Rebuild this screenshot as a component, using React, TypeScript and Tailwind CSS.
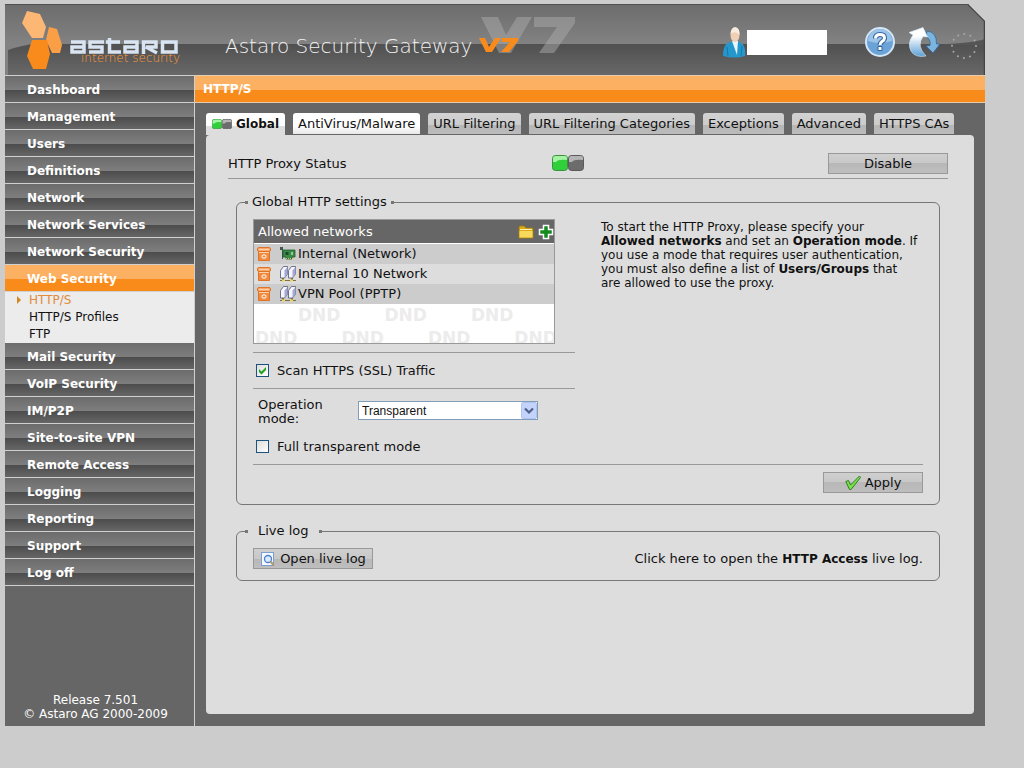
import type { ReactNode } from "react";

const menuTop = ["Dashboard", "Management", "Users", "Definitions", "Network", "Network Services", "Network Security"];
const menuBottom = ["Mail Security", "VoIP Security", "IM/P2P", "Site-to-site VPN", "Remote Access", "Logging", "Reporting", "Support", "Log off"];

const tabs = ["URL Filtering", "URL Filtering Categories", "Exceptions", "Advanced", "HTTPS CAs"];

const networks = [
  { name: "Internal (Network)", kind: "card" },
  { name: "Internal 10 Network", kind: "net" },
  { name: "VPN Pool (PPTP)", kind: "net" },
];

function StatusLight({ small }: { small?: boolean }) {
  return (
    <svg className={small ? "h-[10px] w-5" : "h-4 w-8"} viewBox="0 0 32 16" role="img" aria-label="Enabled">
      <rect x="0.5" y="0.5" width="15" height="15" rx="3" fill="#2fd03a" stroke="#3b8f3f" />
      <path d="M1 7V3.500Q1 1 3.500 1H13Q15 1 15 3V5Q6 4 4 7Z" fill="#a4f2a4" />
      <rect x="16.500" y="0.5" width="15" height="15" rx="3" fill="#6c6c6c" stroke="#5a5a5a" />
      <path d="M17 7V3.500Q17 1 19.500 1H29Q31 1 31 3V5Q22 4 20 7Z" fill="#b5b5b5" />
    </svg>
  );
}

function TrashIcon() {
  return (
    <svg className="h-[14px] w-[14px]" viewBox="0 0 14 14" aria-hidden="true">
      <path d="M1.500 4.500H12.500V13.500H1.500Z" fill="#f28a3c" stroke="#dd7429" />
      <rect x="0.5" y="0.5" width="13" height="4" rx="1.500" fill="#f8a868" stroke="#dd7429" />
      <path d="M2 2.500H12M2 5.500H12" stroke="#fbd0ab" />
      <rect x="5" y="8" width="4" height="3" rx="1" fill="none" stroke="#fff" />
    </svg>
  );
}

function CardIcon() {
  return (
    <svg className="h-4 w-4" viewBox="0 0 16 16" aria-hidden="true">
      <path d="M0 1H3V13H2V4H0Z" fill="#3d5a45" />
      <path d="M3 4H15V11H12V13H6V11H3Z" fill="#3c8a4a" stroke="#1f5a2d" strokeWidth=".8" />
      <rect x="5.500" y="6" width="3" height="3" fill="#1e4a2a" />
      <rect x="11" y="6" width="2" height="3" fill="#8ccf92" />
      <path d="M6 12.500H13" stroke="#d8c860" strokeDasharray="1 1" />
    </svg>
  );
}

function NetworkIcon() {
  return (
    <svg className="h-4 w-4" viewBox="0 0 16 16" aria-hidden="true">
      <path d="M3 11V14M12 11V14" stroke="#8d7a35" strokeWidth="2" />
      <path d="M0 14.500H16" stroke="#7c7048" />
      <path d="M2 14.500H5M10 14.500H13" stroke="#efd566" strokeWidth="2" />
      <path d="M.5 4.500L3.500 .5H7.500V8L4.500 12H.5Z" fill="#f4f5ff" stroke="#50546e" strokeWidth=".8" />
      <path d="M4.500 4.500L7.500 1V8L4.500 12Z" fill="#a3a8d6" />
      <path d="M8.500 4.500L11.500 .5H15.500V8L12.500 12H8.500Z" fill="#f4f5ff" stroke="#50546e" strokeWidth=".8" />
      <path d="M12.500 4.500L15.500 1V8L12.500 12Z" fill="#a3a8d6" />
    </svg>
  );
}

function FolderIcon() {
  return (
    <svg className="h-4 w-4" viewBox="0 0 16 16" aria-hidden="true">
      <path d="M1 3.500Q1 2 2.500 2H6L8 4H14Q15 4 15 5V14H1Z" fill="#d9a91c" stroke="#a57d0b" strokeWidth=".8" />
      <path d="M2 5.500H14" stroke="#fff3b0" />
      <path d="M1.500 7H14.500V13.500H1.500Z" fill="#f7da5c" />
    </svg>
  );
}

function PlusIcon() {
  return (
    <svg className="h-4 w-4" viewBox="0 0 16 16" aria-hidden="true">
      <path d="M5.500 1.500H10.500V5.500H14.500V10.500H10.500V14.500H5.500V10.500H1.500V5.500H5.500Z" fill="#178a1e" stroke="#fff" strokeWidth="1.500" />
    </svg>
  );
}

function CheckIcon() {
  return (
    <svg className="h-4 w-4" viewBox="0 0 16 16" aria-hidden="true">
      <path d="M.8 6.500L3.500 5.500 5.500 10 14.500 1 15.500 2.500 6 14.500 4.500 14.500Z" fill="#7be04c" stroke="#2f7d24" />
    </svg>
  );
}

function LogIcon() {
  return (
    <svg className="h-4 w-4" viewBox="0 0 16 16" aria-hidden="true">
      <rect x="1.500" y="1.500" width="12" height="13" fill="#f4f8ff" stroke="#7d9fd0" />
      <circle cx="8" cy="8" r="3.500" fill="#dcebfb" stroke="#4c82c8" strokeWidth="1.300" />
      <path d="M10.500 10.500L14 14.500" stroke="#b09a70" strokeWidth="2" />
    </svg>
  );
}

function Logo() {
  return (
    <svg className="h-[71px] w-[220px] shrink-0" viewBox="0 0 220 71" role="img" aria-label="Astaro internet security">
      <path d="M0 39H34Q14 42 3 46V71H0Z" fill="#828282" />
      <path d="M22 7 35 10 41 23 38 34H27L17 19Z" fill="#fdb775" />
      <path d="M44 23 52 25 57 41 55 49H47L41 36Z" fill="#fb9f46" />
      <path d="M27 36H42L45 50 41 65H28L22 52Z" fill="#f98a1c" />
      <g fill="none" stroke="#d8e4f2" strokeWidth="3.500">
        <path d="M66 38H79V48H67V43H79" />
        <path d="M99 38H85V43H97V48H84" />
        <path d="M104.500 34V48H116M101 38H115" />
        <path d="M119 38H132V48H120V43H132" />
        <path d="M138.500 50V38H151V43H141L152 49" />
        <path d="M157.500 38H171V48H157.500Z" />
      </g>
      <text x="76" y="58" className="font-['DejaVu_Sans'] text-[12px] font-extralight" fill="#ff9a33">internet security</text>
    </svg>
  );
}

function Product() {
  return (
    <svg className="h-[71px] w-[360px] shrink-0" viewBox="0 0 360 71" role="img" aria-label="Astaro Security Gateway V7">
      <path d="M256 13H273L281 31 292 13H307L286 49H274Z" fill="#aaa" opacity=".5" />
      <path d="M309 13H350V19L329 49H314L332 23H309Z" fill="#aaa" opacity=".5" />
      <text x="0" y="49" className="font-['DejaVu_Sans'] text-[20px] font-extralight" fill="#f2f2f2">Astaro Security Gateway</text>
      <path d="M254 34H260L264 43 270 34H276L267 48H261Z" fill="#f98a1c" />
      <path d="M277 34H293V37L284 48H276L285 38H277Z" fill="#f98a1c" />
    </svg>
  );
}

function UserIcon() {
  return (
    <svg className="h-[31px] w-6" viewBox="0 0 24 31" aria-hidden="true">
      <path d="M0 29Q0 18 5 16L12 13 18 16Q23 18 22 29Q12 32 0 29Z" fill="#2497cc" />
      <path d="M9 14 15 14 14 28Z" fill="#eaf6fc" />
      <path d="M4 20 5 29M19 19 18 29" stroke="#1679ab" />
      <ellipse cx="12" cy="8" rx="4.500" ry="7" fill="#efd0b5" />
      <path d="M7.500 7Q8 0 12.500 0 17 1 16.500 8Q12 3 7.500 7Z" fill="#f7ecdf" />
    </svg>
  );
}

function HelpIcon() {
  return (
    <svg className="h-8 w-8" viewBox="0 0 32 32" aria-hidden="true">
      <circle cx="16" cy="16" r="14" fill="#6ba3d6" stroke="#d4e6f6" strokeWidth="2" />
      <path d="M4 15A12 12 0 0 1 28 15Q16 19 4 15Z" fill="#9cc4e8" />
      <path d="M11.500 12.500Q11.500 8.500 16 8.500T20.500 12Q20.500 14 18 15.500 16 17 16 19" fill="none" stroke="#31639a" strokeWidth="5" />
      <path d="M14 20.500H18V24.500H14Z" fill="#fff" stroke="#31639a" />
      <path d="M11.500 12.500Q11.500 8.500 16 8.500T20.500 12Q20.500 14 18 15.500 16 17 16 19" fill="none" stroke="#fff" strokeWidth="3" />
    </svg>
  );
}

function ReloadIcon() {
  return (
    <svg className="h-8 w-8" viewBox="0 0 32 32" aria-hidden="true">
      <defs>
        <linearGradient id="arrow" x1="0" y1="0" x2="0" y2="1">
          <stop offset="0.3" stopColor="#fff" />
          <stop offset="1" stopColor="#5b9fd6" />
        </linearGradient>
      </defs>
      <path d="M19 5Q29 6 28.500 18L32 18 25 27 18 20 22 19.500Q23 13 18 11Z" fill="#7db4de" stroke="#2f679c" strokeWidth=".8" />
      <path d="M18 30Q7 32 3 25 -1 17 5 9L1 6.500 15 1.500 19.500 11 15 10.500Q8 20 18 30Z" fill="url(#arrow)" stroke="#dcecf8" strokeWidth=".6" />
    </svg>
  );
}

function MenuItem({ children, active }: { children: ReactNode; active?: boolean }) {
  return (
    <a
      href="#"
      className={`flex h-[27px] items-center border-b border-[#d0d0d0] pt-px pl-[22px] text-[12px] font-bold text-white ${
        active
          ? "bg-[linear-gradient(#fbb062_0_54%,#f98b1b_54%)]"
          : "bg-[linear-gradient(#6c6c6c,#7e7e7e_54%,#4c4c4c_54%,#666)]"
      }`}
    >
      {children}
    </a>
  );
}

function Group({ title, children }: { title: ReactNode; children: ReactNode }) {
  return (
    <fieldset className="min-w-0 rounded-md border border-[#777] px-4 pb-[11px]">
      <legend className="-ml-2 flex items-center gap-1 leading-4">
        <span className="size-[3px] bg-[#777]" />
        {title}
        <span className="size-[3px] bg-[#777]" />
      </legend>
      {children}
    </fieldset>
  );
}

function Checkbox({ label, checked }: { label: string; checked?: boolean }) {
  return (
    <label className="flex items-center gap-2 pl-[3px]">
      <span className="relative flex">
        <input
          type="checkbox"
          defaultChecked={checked}
          className="peer size-[13px] appearance-none border border-[#1c5180] bg-[linear-gradient(135deg,#dcdcd7,#fff)]"
        />
        <svg className="pointer-events-none absolute inset-0 hidden size-[13px] peer-checked:block" viewBox="0 0 13 13" aria-hidden="true">
          <path d="M3 5L5.500 7.500 10 3V6L5.500 10.500 3 8Z" fill="#21a121" />
        </svg>
      </span>
      {label}
    </label>
  );
}

const buttonStyle = "flex h-[21px] items-center justify-center border border-[#999] bg-[linear-gradient(#cfcfcf,#c8c8c8_50%,#b8b8b8_50%,#bebebe)]";

export default function App() {
  return (
    <div className="min-h-screen bg-[#ccc] pt-1 pr-[39px] pb-[42px] pl-[5px] font-['DejaVu_Sans',Verdana,sans-serif] text-[13px] text-[#111]">
      {/* Header */}
      <header className="relative flex h-[71px] items-start bg-[linear-gradient(#6c6c6c,#828282_56%,#505050_56%,#686868)] [clip-path:polygon(0_0,calc(100%-17px)_0,100%_17px,100%_100%,0_100%)]">
        <svg className="absolute top-0 right-0 h-[71px] w-[60px]" viewBox="0 0 60 71" aria-hidden="true">
          <path d="M20 40Q48 39 60 35V41H20Z" fill="#555" />
          <path d="M42.500 0L59.500 17V71" fill="none" stroke="#444" strokeWidth="1.500" />
        </svg>
        <div className="absolute inset-x-0 top-0 h-px bg-[#505050]" />
        <Logo />
        <Product />
        <div className="relative mr-[5px] ml-auto flex h-[71px] shrink-0 items-center pt-[5px]">
          <UserIcon />
          <input aria-label="User name" className="h-[25px] w-20 bg-white" />
          <button aria-label="Help" className="ml-[37px]"><HelpIcon /></button>
          <button aria-label="Reload" className="ml-3"><ReloadIcon /></button>
          <svg className="mt-2 ml-2 h-8 w-8" viewBox="0 0 32 32" aria-hidden="true">
            <circle cx="16" cy="16" r="12" fill="none" stroke="#aaa" strokeWidth="2" strokeLinecap="round" strokeDasharray="0 6.280" />
          </svg>
        </div>
      </header>

      <div className="flex min-h-[651px] bg-[#666]">
        {/* Menu */}
        <nav className="flex w-[190px] shrink-0 flex-col border-t border-r border-[#d0d0d0]">
          {menuTop.map((m) => <MenuItem key={m}>{m}</MenuItem>)}
          <MenuItem active>Web Security</MenuItem>
          <div className="flex flex-col bg-[#ececec] pl-6 text-[12px] leading-[17px]">
            <a href="#" className="relative text-[#e08a3c]">
              <span className="absolute top-[4px] -left-3 border-y-[4px] border-l-[4px] border-y-transparent border-l-[#d08a20]" />
              HTTP/S
            </a>
            <a href="#">HTTP/S Profiles</a>
            <a href="#">FTP</a>
          </div>
          {menuBottom.map((m) => <MenuItem key={m}>{m}</MenuItem>)}
          <p className="mt-auto pr-2 pb-[5px] text-center text-[12px] leading-[14px] text-white">
            Release 7.501
            <br />© Astaro AG 2000-2009
          </p>
        </nav>

        <div className="flex min-w-0 flex-1 flex-col">
          <h1 className="flex h-7 items-center border-y border-[#e6cdb0] bg-[linear-gradient(#fbb062_0_54%,#f98b1b_54%)] pl-2 text-[12px] font-bold text-white">
            HTTP/S
          </h1>

          {/* Tabs */}
          <div className="mt-[10px] flex gap-2 pl-[11px]">
            <button className="flex h-[22px] items-center gap-1 rounded-t-[3px] bg-[linear-gradient(#fff_0_60%,#ddd_60%)] px-[6px] text-[12px] font-bold">
              <StatusLight small />
              Global
            </button>
            <button className="h-[21px] rounded-t-[3px] bg-[linear-gradient(#fff_0_60%,#e8e8e8)] px-[5px] pt-px">AntiVirus/Malware</button>
            {tabs.map((t) => (
              <button key={t} className="h-[21px] rounded-t-[3px] bg-[linear-gradient(#d2d2d2,#ccc_55%,#b6b6b6_55%,#bbb)] px-[5px] pt-px whitespace-nowrap">
                {t}
              </button>
            ))}
          </div>

          <main className="mx-[11px] mb-3 flex-1 rounded-sm bg-[#ddd] pt-[18px] pr-[26px] pb-6 pl-[22px]">
            {/* Status row */}
            <div className="flex h-[26px] items-start border-b border-[#999]">
              <span className="w-[324px] leading-[21px]">HTTP Proxy Status</span>
              <span className="pt-[2px]"><StatusLight /></span>
              <button className={`${buttonStyle} ml-auto w-[120px]`}>Disable</button>
            </div>

            <div className="mt-[15px] mr-2 ml-2 flex flex-col gap-[18px]">
              <Group title="Global HTTP settings">
                <div className="mt-[9px] flex gap-[26px]">
                  <div className="w-[322px] shrink-0">
                    <div className="mb-2 h-[125px] w-[302px] overflow-hidden border border-[#999] bg-white">
                      <div className="flex h-[23px] items-center gap-1 bg-[#666] pl-1 text-white">
                        <span className="flex-1">Allowed networks</span>
                        <button aria-label="Browse networks"><FolderIcon /></button>
                        <button aria-label="Add network"><PlusIcon /></button>
                      </div>
                      <ul className="border-t border-white">
                        {networks.map((n) => (
                          <li key={n.name} className="flex h-5 items-center pl-[3px] odd:bg-[#ccc] even:bg-[#ddd]">
                            <button aria-label={`Remove ${n.name}`}><TrashIcon /></button>
                            <span className="mr-[2px] ml-[9px]">{n.kind === "card" ? <CardIcon /> : <NetworkIcon />}</span>
                            {n.name}
                          </li>
                        ))}
                      </ul>
                      <div className="text-[17px] leading-[23px] font-bold text-[#ececec]">
                        <div className="flex gap-11 pl-11">
                          <span>DND</span>
                          <span>DND</span>
                          <span>DND</span>
                        </div>
                        <div className="flex gap-11 pl-px">
                          <span>DND</span>
                          <span>DND</span>
                          <span>DND</span>
                          <span>DND</span>
                        </div>
                      </div>
                    </div>
                    <div className="flex h-[37px] items-center border-y border-[#999]">
                      <Checkbox label="Scan HTTPS (SSL) Traffic" checked />
                    </div>
                    <div className="flex h-[42px] items-center pl-[5px]">
                      <label htmlFor="mode" className="w-[100px] pt-1 pr-6 leading-[14px]">Operation mode:</label>
                      <span className="relative">
                        <select id="mode" className="block h-[19px] w-[180px] appearance-none border border-[#7f9db9] bg-white pl-[3px] font-['Liberation_Sans',Arial,sans-serif] text-[12px]">
                          <option>Transparent</option>
                        </select>
                        <svg className="pointer-events-none absolute top-px right-px h-[17px] w-4" viewBox="0 0 16 17" aria-hidden="true">
                          <rect x="0.5" y="0.5" width="15" height="16" rx="1.500" fill="#c3d3fb" stroke="#b0c4f0" />
                          <path d="M4 6.500L8 10.500 12 6.500" fill="none" stroke="#4d6185" strokeWidth="2.200" />
                        </svg>
                      </span>
                    </div>
                    <div className="mb-[2px] flex h-[31px] items-center">
                      <Checkbox label="Full transparent mode" />
                    </div>
                  </div>
                  <p className="pt-px text-[12px] leading-[14px]">
                    To start the HTTP Proxy, please specify your
                    <br />
                    <b>Allowed networks</b> and set an <b>Operation mode</b>. If
                    <br />
                    you use a mode that requires user authentication,
                    <br />
                    you must also define a list of <b>Users/Groups</b> that
                    <br />
                    are allowed to use the proxy.
                  </p>
                </div>
                <div className="flex justify-end border-t border-[#999] pt-[7px]">
                  <button className={`${buttonStyle} w-[100px] gap-1`}>
                    <CheckIcon />
                    Apply
                  </button>
                </div>
              </Group>

              <Group title={<span className="px-[6px]">Live log</span>}>
                <div className="mt-[9px] flex items-center justify-between">
                  <button className={`${buttonStyle} w-[120px] gap-1`}>
                    <LogIcon />
                    Open live log
                  </button>
                  <p>
                    Click here to open the <b className="text-[12px]">HTTP Access</b> live log.
                  </p>
                </div>
              </Group>
            </div>
          </main>
        </div>
      </div>
    </div>
  );
}
